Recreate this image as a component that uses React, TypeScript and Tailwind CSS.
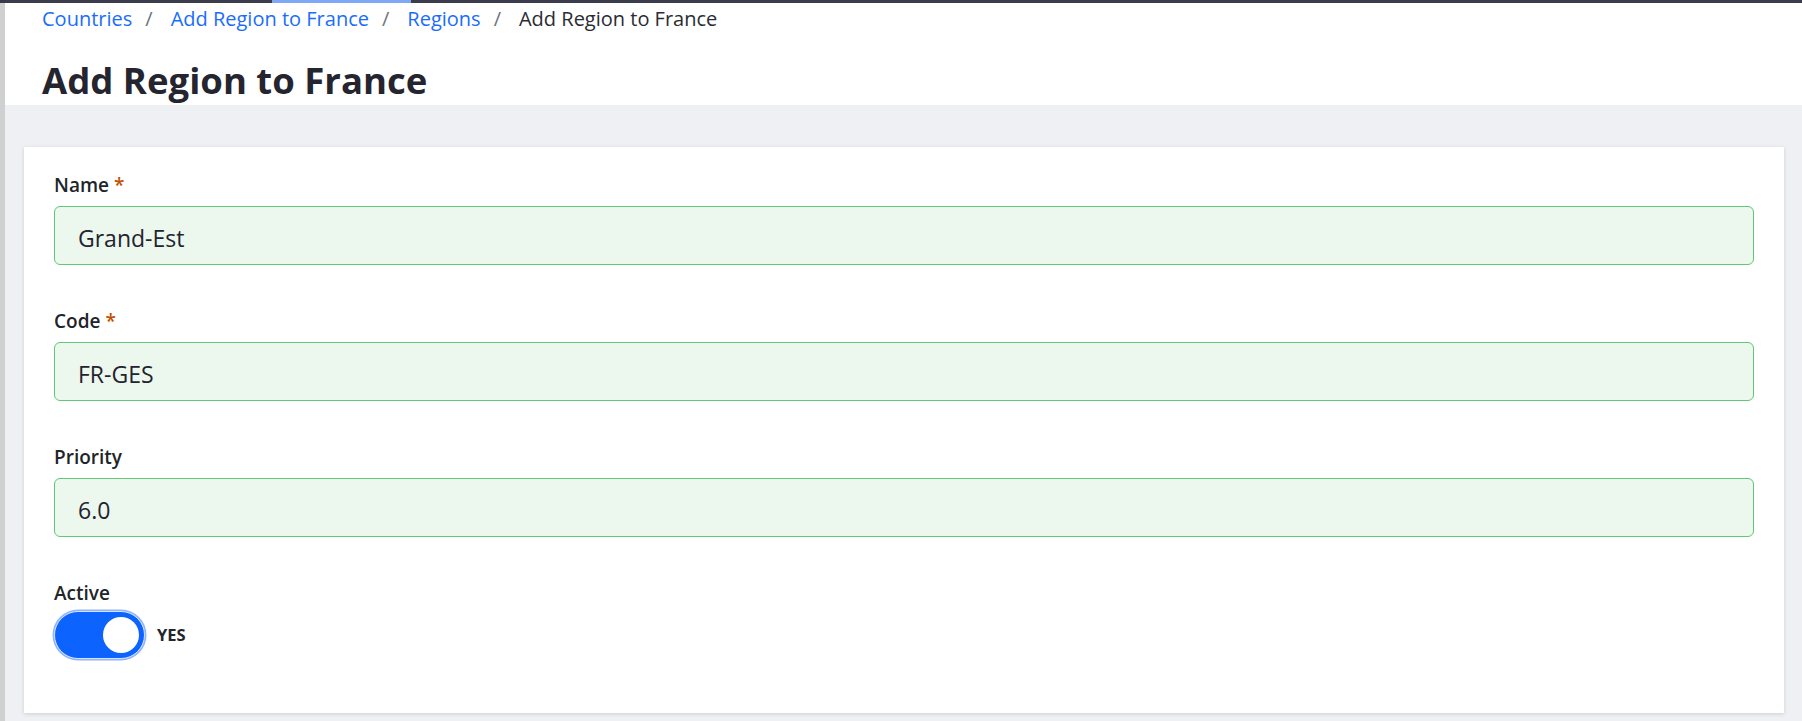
export default function App() {
  const crumbs = [
    { label: "Countries", link: true },
    { label: "Add Region to France", link: true },
    { label: "Regions", link: true },
    { label: "Add Region to France", link: false },
  ];

  const fields = [
    { label: "Name", value: "Grand-Est", required: true },
    { label: "Code", value: "FR-GES", required: true },
    { label: "Priority", value: "6.0", required: false },
  ];

  return (
    <div
      className="min-h-[721px] w-full bg-[#eff0f4] flex flex-col"
      style={{ fontFamily: '"Open Sans", "Noto Sans", sans-serif' }}
    >
      {/* Top loading bar */}
      <div className="h-[3px] flex">
        <div className="w-[272px] bg-[#3a3c4c]" />
        <div className="w-[139px] bg-[#7ea8f6]" />
        <div className="flex-1 bg-[#3a3c4c]" />
      </div>

      <div className="flex flex-1">
        {/* Sidebar edge */}
        <div className="w-[5px] bg-[#d0d0d0]" />

        <main className="flex-1 flex flex-col">
          {/* Header */}
          <div className="bg-white pl-[37px] pt-[1px] pb-[3px]">
            <nav className="flex items-center text-[20px] leading-[30px]">
              {crumbs.map((c, i) => (
                <div key={i} className="flex items-center">
                  <span className={c.link ? "text-[#1a6dfc]" : "text-[#2b2b33]"}>{c.label}</span>
                  {i < crumbs.length - 1 && (
                    <span className="ml-[13px] mr-[18px] text-[#6c757d]">/</span>
                  )}
                </div>
              ))}
            </nav>
            <h1 className="mt-[25px] text-[36.5px] leading-[43px] font-bold text-[#25252f]">
              Add Region to France
            </h1>
          </div>

          {/* Form card */}
          <div className="pt-[42px] pl-[19px] pr-[18px]">
            <div className="bg-white shadow-[0_1px_4px_rgba(0,0,0,0.14)] px-[30px] pt-[24px] pb-[54px]">
              {fields.map((f) => (
                <div key={f.label} className="mb-[42px]">
                  <label className="block text-[19px] leading-[29px] font-semibold text-[#212529] mb-[6px]">
                    {f.label}
                    {f.required && <span className="text-[#c25000] ml-[5px]">*</span>}
                  </label>
                  <input
                    readOnly
                    value={f.value}
                    className="block w-full h-[59px] pt-[5px] px-[23px] text-[23px] text-[#23232f] bg-[#ecf7ee] border border-[#62c774] rounded-[6px] outline-none"
                  />
                </div>
              ))}

              <div>
                <label className="block text-[19px] leading-[29px] font-semibold text-[#212529]">
                  Active
                </label>
                <div className="flex items-center mt-[3px]">
                  <div className="w-[91px] h-[48px] rounded-full bg-[#0d63fd] border border-[#d6e4ff] shadow-[0_0_0_1.5px_#8fb6fb] flex items-center justify-end pr-[5px]">
                    <div className="w-[36px] h-[36px] rounded-full bg-white" />
                  </div>
                  <span className="ml-[12px] text-[16.5px] font-bold text-[#212529]">YES</span>
                </div>
              </div>
            </div>
          </div>
        </main>
      </div>
    </div>
  );
}
